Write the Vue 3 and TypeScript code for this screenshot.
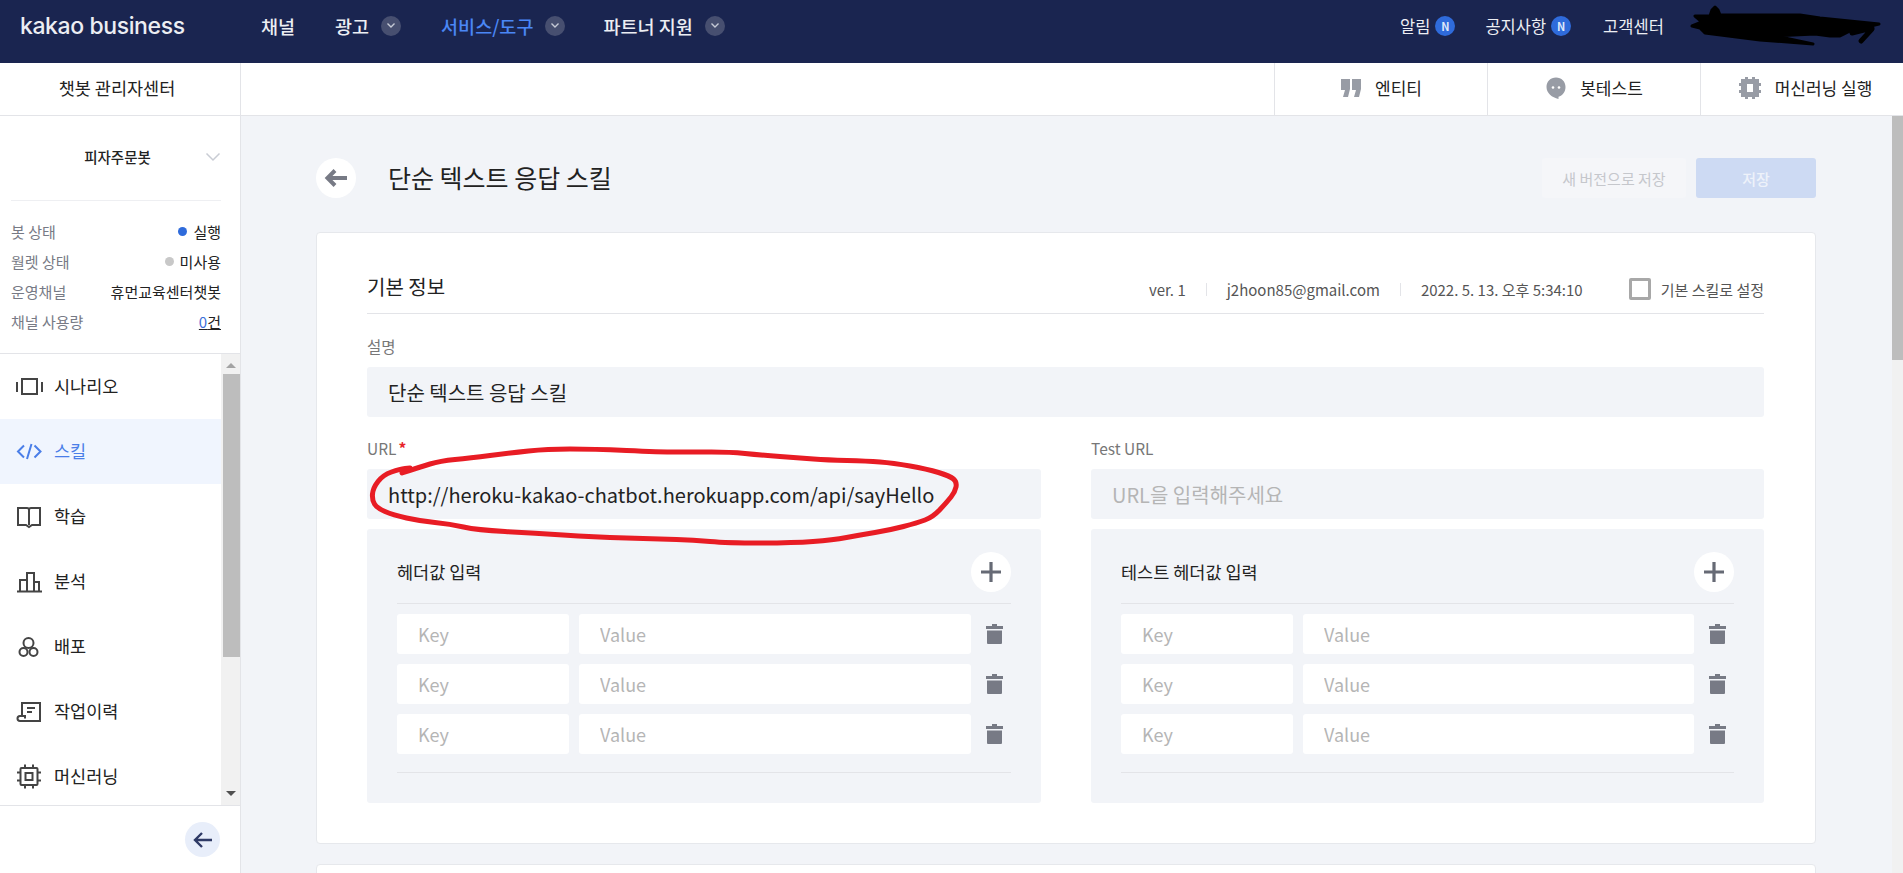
<template>
  <div class="page">
    <header class="topbar">
      <div class="logo">kakao business</div>
      <nav class="gnb">
        <a v-for="item in gnbItems" :key="item.label" :class="['gnb-item', { on: item.active }]">
          {{ item.label }}
          <span v-if="item.arrow" class="gnb-arrow">
            <svg width="10" height="7" viewBox="0 0 10 7"><path d="M1.5 1.5 5 5l3.5-3.5" fill="none" stroke="#c6cad6" stroke-width="1.4" /></svg>
          </span>
        </a>
      </nav>
      <div class="util">
        <a class="util-item">알림<span class="badge">N</span></a>
        <a class="util-item">공지사항<span class="badge">N</span></a>
        <a class="util-item">고객센터</a>
      </div>
      <!-- blacked out account name -->
      <svg class="scribble" width="220" height="60" viewBox="0 0 220 60">
        <g fill="#000" stroke="#000" stroke-width="3" stroke-linecap="round" stroke-linejoin="round">
          <path d="M30 16 32 10 35 7 38 10 40 15 120 15 140 18 199 24 170 31 160 36 150 36 135 34 95 36 133 44 80 40 25 33 20 28 12 26 22 22 15 16z" />
          <path d="M172 33 192 28M181 41 192 29" fill="none" stroke-width="5" />
        </g>
      </svg>
    </header>

    <div class="subbar">
      <div class="subbar-title">챗봇 관리자센터</div>
      <div class="subbar-tabs">
        <a class="tab">
          <svg width="22" height="20" viewBox="0 0 22 20"><path fill="#989ca5" d="M1 1h9v10l-2 8H3l2-7H1zM12 1h9v10l-2 8h-5l2-7h-4z" /></svg>
          엔티티
        </a>
        <a class="tab">
          <svg width="22" height="24" viewBox="0 0 22 24">
            <path fill="#989ca5" d="M11 1.500c5.500 0 9.500 4 9.500 9.500 0 5-3 8.500-7 9.800V23C7 21.500 1.500 17 1.500 11 1.500 5.500 5.500 1.500 11 1.500z" />
            <circle cx="8" cy="11.500" r="1.300" fill="#fff" /><circle cx="14" cy="11.500" r="1.300" fill="#fff" />
          </svg>
          봇테스트
        </a>
        <a class="tab">
          <svg width="24" height="24" viewBox="0 0 24 24">
            <path fill="#989ca5" fill-rule="evenodd" d="M7 1h3v2h4V1h3v2h4v4h2v3h-2v4h2v3h-2v4h-4v2h-3v-2h-4v2H7v-2H3v-4H1v-3h2v-4H1V7h2V3h4zM9 8v8h6V8z" />
          </svg>
          머신러닝 실행
        </a>
      </div>
    </div>

    <div class="body">
      <aside class="side">
        <div class="bot-box">
          <div class="bot-name">
            피자주문봇
            <svg class="bot-chevron" width="16" height="10" viewBox="0 0 16 10"><path d="M1.500 1.500 8 8l6.500-6.500" fill="none" stroke="#c9ccd4" stroke-width="1.500" /></svg>
          </div>
          <dl class="bot-info">
            <div class="info-row"><dt>봇 상태</dt><dd><i class="dot blue"></i>실행</dd></div>
            <div class="info-row"><dt>월렛 상태</dt><dd><i class="dot gray"></i>미사용</dd></div>
            <div class="info-row"><dt>운영채널</dt><dd>휴먼교육센터챗봇</dd></div>
            <div class="info-row"><dt>채널 사용량</dt><dd class="usage"><span>0</span>건</dd></div>
          </dl>
        </div>

        <div class="menu-wrap">
          <ul class="menu">
            <li class="menu-item">
              <svg class="menu-icon" viewBox="0 0 28 28"><rect x="7" y="6" width="15" height="15" /><path d="M2 9v10M27 9v10" /></svg>
              시나리오
            </li>
            <li class="menu-item on">
              <svg class="menu-icon" viewBox="0 0 28 28"><path d="M9 7.500 3 13.500l6 6M16.500 6 12 21M19.500 7.500l6 6-6 6" /></svg>
              스킬
            </li>
            <li class="menu-item">
              <svg class="menu-icon" viewBox="0 0 28 28"><path d="M14 22V7c0-1-1-2-2-2H3v17h8l3 2 3-2h8V5h-9c-1 0-2 1-2 2" /></svg>
              학습
            </li>
            <li class="menu-item">
              <svg class="menu-icon" viewBox="0 0 28 28"><path d="M2 23.500h25M5 23V12h7M12 23V5h7v18M19 14h5v9" /></svg>
              분석
            </li>
            <li class="menu-item">
              <svg class="menu-icon" viewBox="0 0 28 28"><circle cx="13.500" cy="10" r="5" /><circle cx="8.500" cy="19" r="4" /><circle cx="18.500" cy="19" r="4" /></svg>
              배포
            </li>
            <li class="menu-item">
              <svg class="menu-icon" viewBox="0 0 28 28"><path d="M7 19V5h18v18H5a2.500 2.500 0 0 1 0-5h5v2.500M12 10h8M12 14h5" /></svg>
              작업이력
            </li>
            <li class="menu-item">
              <svg class="menu-icon" viewBox="0 0 28 28"><rect x="5.500" y="5" width="17" height="17" rx="1" /><rect x="10.500" y="10" width="7" height="7" /><path d="M10 1.500V5M18 1.500V5M10 22v3.500M18 22v3.500M2 9.500h3.500M2 17.500h3.500M22.500 9.500H26M22.500 17.500H26" /></svg>
              머신러닝
            </li>
          </ul>
          <div class="side-scroll">
            <i class="arrow up"></i>
            <div class="side-thumb"></div>
            <i class="arrow down"></i>
          </div>
        </div>

        <div class="side-foot">
          <button class="collapse">
            <svg width="20" height="18" viewBox="0 0 20 18"><path d="M9 2 2 9l7 7M2 9h17" fill="none" stroke="#2f3a66" stroke-width="2.400" /></svg>
          </button>
        </div>
      </aside>

      <main class="main">
        <div class="title-row">
          <button class="back">
            <svg width="24" height="20" viewBox="0 0 24 20"><path d="M11 2.500 3.500 10l7.500 7.500M4 10h19" fill="none" stroke="#777a85" stroke-width="4" /></svg>
          </button>
          <h1 class="title">단순 텍스트 응답 스킬</h1>
          <button class="btn ghost">새 버전으로 저장</button>
          <button class="btn primary">저장</button>
        </div>

        <section class="card">
          <div class="card-head">
            <h2>기본 정보</h2>
            <div class="meta">
              <span>ver. 1</span><i class="sep"></i>
              <span>j2hoon85@gmail.com</span><i class="sep"></i>
              <span>2022. 5. 13. 오후 5:34:10</span>
              <label class="check"><i class="box"></i>기본 스킬로 설정</label>
            </div>
          </div>

          <div class="label">설명</div>
          <input class="field" value="단순 텍스트 응답 스킬" />

          <div class="cols">
            <div v-for="col in columns" :key="col.label" class="col">
              <div class="label">{{ col.label }}<em v-if="col.required">*</em></div>
              <input class="field" :value="col.url" placeholder="URL을 입력해주세요" />
              <div class="panel">
                <div class="panel-head">
                  <span>{{ col.title }}</span>
                  <button class="plus">
                    <svg width="22" height="22" viewBox="0 0 22 22"><path d="M11 1v20M1 11h20" fill="none" stroke="#666a75" stroke-width="3.200" /></svg>
                  </button>
                </div>
                <div class="rows">
                  <div v-for="n in 3" :key="n" class="row">
                    <input class="cell key" placeholder="Key" />
                    <input class="cell" placeholder="Value" />
                    <span class="trash">
                      <svg width="17" height="20" viewBox="0 0 17 20"><path fill="#777a85" d="M6 0h5v2h6v3H0V2h6zM1 6.500h15V19a1 1 0 0 1-1 1H2a1 1 0 0 1-1-1z" /></svg>
                    </span>
                  </div>
                </div>
              </div>
            </div>
          </div>

          <!-- red marker circle around the url -->
          <svg class="marker" width="620" height="110" viewBox="360 445 620 110">
            <path :d="markerPath" fill="none" stroke="#e81c24" stroke-width="5" stroke-linejoin="round" stroke-linecap="round" />
          </svg>
        </section>

        <section class="card next"></section>
      </main>

      <div class="page-scroll"><div class="page-thumb"></div></div>
    </div>
  </div>
</template>

<script setup lang="ts">
interface GnbItem {
  label: string;
  arrow?: boolean;
  active?: boolean;
}

interface UrlColumn {
  label: string;
  required: boolean;
  url: string;
  title: string;
}

const gnbItems: GnbItem[] = [
  { label: '채널' },
  { label: '광고', arrow: true },
  { label: '서비스/도구', arrow: true, active: true },
  { label: '파트너 지원', arrow: true },
];

const columns: UrlColumn[] = [
  { label: 'URL', required: true, url: 'http://heroku-kakao-chatbot.herokuapp.com/api/sayHello', title: '헤더값 입력' },
  { label: 'Test URL', required: false, url: '', title: '테스트 헤더값 입력' },
];

// hand drawn stroke, smoothed through the midpoints
const markerPoints: [number, number][] = [
  [402, 473], [420, 467], [440, 461], [470, 458], [510, 453], [547, 449], [593, 449], [660, 452],
  [693, 452], [730, 452], [760, 455], [800, 458], [827, 460], [867, 461], [893, 463], [927, 469],
  [950, 476], [957, 482], [955, 492], [947, 502], [933, 517], [917, 523], [890, 530], [860, 535],
  [833, 540], [793, 543], [727, 543], [693, 540], [660, 539], [593, 537], [533, 533], [477, 530],
  [450, 524], [420, 521], [393, 515], [377, 508], [372, 500], [373, 488], [383, 475], [400, 469], [410, 468],
];

const markerPath = markerPoints.reduce((d, [x, y], i) => {
  if (i === 0) return `M${x} ${y}`;
  const [nx, ny] = markerPoints[i + 1] ?? [x, y];
  return `${d} Q${x} ${y} ${(x + nx) / 2} ${(y + ny) / 2}`;
}, '');
</script>

<style>
html,
body {
  margin: 0;
  overflow: hidden;
}
</style>

<style scoped>
.page {
  height: 873px;
  display: flex;
  flex-direction: column;
  overflow: hidden;
  background: #f2f4f8;
  color: #222;
  font-family: "Noto Sans CJK KR", "Noto Sans", sans-serif;
}

.topbar {
  position: relative;
  flex: none;
  height: 63px;
  background: #1a2550;
  display: flex;
  align-items: flex-start;
  color: #eceef3;
}

.logo {
  width: 261px;
  padding-left: 20px;
  box-sizing: border-box;
  font-family: Inter, sans-serif;
  font-size: 23px;
  font-weight: 500;
  line-height: 52px;
  letter-spacing: -0.4px;
}

.gnb {
  display: flex;
  gap: 40px;
}

.gnb-item {
  display: flex;
  align-items: center;
  gap: 12px;
  height: 51px;
  font-size: 18.5px;
  font-weight: 500;
}

.gnb-item:last-child {
  margin-left: -2px;
}

.gnb-item.on {
  color: #4a87f5;
}

.gnb-arrow {
  width: 20px;
  height: 20px;
  border-radius: 50%;
  background: #474f70;
  display: flex;
  align-items: center;
  justify-content: center;
}

.util {
  position: absolute;
  left: 1400px;
  top: 0;
  display: flex;
  gap: 30px;
}

.util-item {
  display: flex;
  align-items: center;
  gap: 5px;
  height: 51px;
  font-size: 16.5px;
}

.util-item:last-child {
  margin-left: 2px;
}

.badge {
  width: 20px;
  height: 20px;
  border-radius: 50%;
  background: #2f6bdb;
  font-size: 11px;
  font-weight: 700;
  line-height: 20px;
  text-align: center;
  color: #dfe8fa;
}

.scribble {
  position: absolute;
  left: 1680px;
  top: 0;
}

.subbar {
  flex: none;
  height: 52px;
  display: flex;
  background: #fff;
  border-bottom: 1px solid #e3e4e8;
}

.subbar-title {
  width: 240px;
  padding-right: 6px;
  box-sizing: content-box;
  border-right: 1px solid #e3e4e8;
  text-align: center;
  font-size: 17.5px;
  line-height: 49px;
  width: 234px;
}

.subbar-tabs {
  margin-left: auto;
  display: flex;
}

.tab {
  width: 213px;
  padding-bottom: 3px;
  box-sizing: border-box;
  border-left: 1px solid #e3e4e8;
  display: flex;
  align-items: center;
  justify-content: center;
  gap: 13px;
  font-size: 17px;
}

.tab:last-child {
  width: 203px;
  padding-left: 6px;
}

.body {
  flex: 1;
  min-height: 0;
  display: flex;
}

.side {
  flex: none;
  width: 240px;
  background: #fff;
  border-right: 1px solid #e3e4e8;
  display: flex;
  flex-direction: column;
}

.bot-box {
  flex: none;
  height: 238px;
  padding: 0 19px 0 11px;
  box-sizing: border-box;
  border-bottom: 1px solid #e3e4e8;
}

.bot-name {
  position: relative;
  height: 84px;
  padding-left: 3px;
  border-bottom: 1px solid #eeeff2;
  text-align: center;
  font-size: 14.5px;
  font-weight: 500;
  line-height: 82px;
}

.bot-chevron {
  position: absolute;
  right: 0;
  top: 36px;
}

.bot-info {
  margin: 15px 0 0;
  font-size: 15px;
}

.info-row {
  height: 30px;
  display: flex;
  justify-content: space-between;
  align-items: center;
}

.info-row dt {
  color: #777a85;
}

.info-row dd {
  margin: 0;
  display: flex;
  align-items: center;
  gap: 6px;
}

.dot {
  width: 9px;
  height: 9px;
  border-radius: 50%;
}

.dot.blue {
  background: #2f6bdb;
}

.dot.gray {
  background: #c8c8c8;
}

.usage {
  gap: 0 !important;
  text-decoration: underline;
}

.usage span {
  color: #3d6fd8;
}

.menu-wrap {
  flex: 1;
  min-height: 0;
  display: flex;
  border-bottom: 1px solid #e3e4e8;
}

.menu {
  flex: 1;
  margin: 0;
  padding: 0;
  list-style: none;
  overflow: hidden;
}

.menu-item {
  height: 65px;
  padding-left: 15px;
  padding-bottom: 2px;
  box-sizing: border-box;
  display: flex;
  align-items: center;
  gap: 11px;
  font-size: 17.5px;
}

.menu-item.on {
  background: #f0f5fe;
  color: #4a7ee8;
}

.menu-icon {
  width: 28px;
  height: 28px;
  margin-top: 2px;
  fill: none;
  stroke: #444;
  stroke-width: 2;
}

.menu-item.on .menu-icon {
  stroke: #4a7ee8;
}

.side-scroll {
  flex: none;
  width: 19px;
  background: #f1f1f1;
  display: flex;
  flex-direction: column;
  align-items: center;
  padding: 0 0 0 1px;
  box-sizing: border-box;
}

.side-thumb {
  width: 17px;
  height: 283px;
  margin-top: 6px;
  background: #bdbdbd;
}

.arrow {
  width: 0;
  height: 0;
  border-left: 5px solid transparent;
  border-right: 5px solid transparent;
}

.arrow.up {
  margin-top: 9px;
  border-bottom: 5px solid #a3a3a3;
}

.arrow.down {
  margin-top: auto;
  margin-bottom: 9px;
  border-top: 5px solid #505050;
}

.side-foot {
  flex: none;
  height: 67px;
  display: flex;
  align-items: center;
  justify-content: flex-end;
  padding-right: 20px;
}

.collapse {
  width: 35px;
  height: 35px;
  padding: 0;
  border: 0;
  border-radius: 50%;
  background: #e8eefa;
  display: flex;
  align-items: center;
  justify-content: center;
}

.main {
  flex: 1;
  min-width: 0;
  padding: 0 76px 0 75px;
  overflow: hidden;
}

.title-row {
  height: 116px;
  display: flex;
  align-items: flex-start;
  gap: 10px;
}

.back {
  width: 40px;
  height: 40px;
  margin-top: 42px;
  padding: 0;
  border: 0;
  border-radius: 50%;
  background: #fff;
  display: flex;
  align-items: center;
  justify-content: center;
}

.title {
  margin: 41px auto 0 22px;
  font-size: 25px;
  font-weight: 400;
  line-height: 40px;
}

.btn {
  height: 40px;
  margin-top: 42px;
  border: 0;
  border-radius: 3px;
  font-family: inherit;
  font-size: 15px;
}

.btn.ghost {
  width: 144px;
  background: #f5f6f9;
  color: #c5c7cc;
}

.btn.primary {
  width: 120px;
  background: #cddaf3;
  color: #eef2fa;
  font-weight: 500;
}

.card {
  position: relative;
  box-sizing: border-box;
  height: 612px;
  padding: 0 51px 0 50px;
  background: #fff;
  border: 1px solid #e6e8ec;
  border-radius: 4px;
}

.next {
  height: 100px;
  margin-top: 20px;
}

.card-head {
  height: 81px;
  display: flex;
  align-items: flex-end;
  justify-content: space-between;
  border-bottom: 1px solid #e3e4e8;
  box-sizing: border-box;
}

.card-head h2 {
  margin: 0 0 9px;
  font-size: 20px;
  font-weight: 400;
  line-height: 34px;
}

.meta {
  height: 40px;
  margin-bottom: 4px;
  display: flex;
  align-items: center;
  gap: 20px;
  font-size: 15px;
  color: #555;
}

.sep {
  width: 1px;
  height: 13px;
  background: #e3e4e8;
}

.check {
  margin-left: 26px;
  display: flex;
  align-items: center;
  gap: 10px;
}

.box {
  width: 16px;
  height: 16px;
  border: 3px solid #a8a8a8;
  border-radius: 2px;
}

.label {
  margin-top: 19px;
  height: 34px;
  font-size: 15.5px;
  line-height: 26px;
  color: #777;
}

.cols .label {
  margin-top: 18px;
}

.label em {
  margin-left: 2px;
  font-style: normal;
  font-weight: 700;
  color: #e8242a;
}

.field {
  display: block;
  width: 100%;
  height: 50px;
  padding: 0 21px;
  box-sizing: border-box;
  border: 0;
  border-radius: 3px;
  outline: 0;
  background: #f2f4f8;
  font-family: inherit;
  font-size: 20px;
  color: #222;
}

.field::placeholder {
  color: #b5b5b5;
}

.cols {
  display: grid;
  grid-template-columns: 674px 673px;
  gap: 50px;
}

.panel {
  height: 274px;
  margin-top: 10px;
  padding: 23px 30px 0;
  box-sizing: border-box;
  background: #f2f4f8;
  border-radius: 3px;
}

.panel-head {
  height: 51px;
  display: flex;
  align-items: flex-start;
  justify-content: space-between;
  border-bottom: 1px solid #e3e4e8;
  font-size: 17.5px;
  line-height: 40px;
}

.plus {
  width: 40px;
  height: 40px;
  padding: 0;
  border: 0;
  border-radius: 50%;
  background: #fff;
  display: flex;
  align-items: center;
  justify-content: center;
}

.rows {
  padding: 10px 0 18px;
  display: flex;
  flex-direction: column;
  gap: 10px;
  border-bottom: 1px solid #e3e4e8;
}

.row {
  display: flex;
  gap: 10px;
}

.cell {
  flex: 1;
  min-width: 0;
  height: 40px;
  padding: 0 21px;
  box-sizing: border-box;
  border: 0;
  border-radius: 3px;
  outline: 0;
  background: #fff;
  font-family: inherit;
  font-size: 18px;
}

.cell.key {
  flex: none;
  width: 172px;
}

.cell::placeholder {
  color: #b5b5b5;
}

.trash {
  flex: none;
  width: 30px;
  padding-right: 8px;
  box-sizing: border-box;
  display: flex;
  align-items: center;
  justify-content: flex-end;
}

.marker {
  position: absolute;
  left: 43px;
  top: 212px;
  pointer-events: none;
}

.page-scroll {
  flex: none;
  width: 11px;
  background: #f1f1f1;
}

.page-thumb {
  height: 244px;
  background: #bdbdbd;
}
</style>
